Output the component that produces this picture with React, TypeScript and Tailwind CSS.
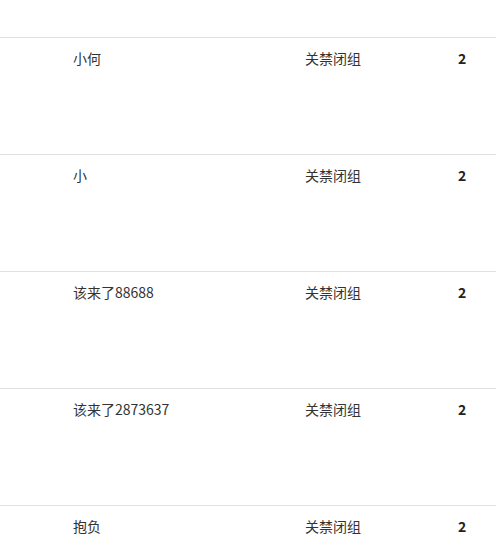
import React from 'react'

const rows = [
  { name: '小何', group: '关禁闭组', count: 2 },
  { name: '小', group: '关禁闭组', count: 2 },
  { name: '该来了88688', group: '关禁闭组', count: 2 },
  { name: '该来了2873637', group: '关禁闭组', count: 2 },
  { name: '抱负', group: '关禁闭组', count: 2 },
]

const App = () => {
  return (
    <div
      className="w-[496px] h-[560px] overflow-hidden bg-white text-[14px] text-[#333]"
      style={{ fontFamily: '"Noto Sans CJK SC", sans-serif' }}
    >
      <div className="h-[37px]" />
      {rows.map((r, i) => (
        <div key={i} className="flex h-[117px] border-t border-[#e0e0e0] pt-[10px] leading-[20px]">
          <div className="w-[73px] shrink-0" />
          <div className="w-[232px] shrink-0">{r.name}</div>
          <div className="w-[153px] shrink-0">{r.group}</div>
          <div className="font-bold text-[#222]">{r.count}</div>
        </div>
      ))}
    </div>
  )
}

export default App
